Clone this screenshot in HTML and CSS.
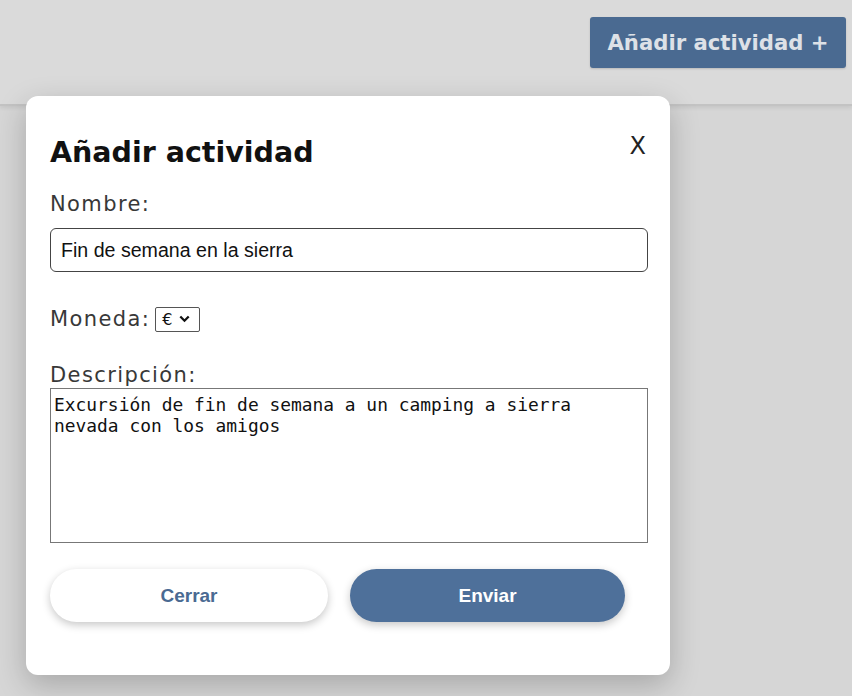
FILE: index.html
```html
<!DOCTYPE html>
<html lang="es">
<head>
<meta charset="utf-8">
<title>Añadir actividad</title>
<link rel="stylesheet" href="styles.css">
</head>
<body>
<header class="topbar">
  <button class="add-btn" type="button">Añadir actividad +</button>
</header>
<main class="content"></main>
<div class="modal">
  <button class="close" type="button">X</button>
  <h2 class="title">Añadir actividad</h2>
  <label class="label label-name" for="nombre">Nombre:</label>
  <input class="text-input" id="nombre" type="text" value="Fin de semana en la sierra">
  <div class="currency-row">
    <label class="label" for="moneda">Moneda:</label>
    <span class="select" id="moneda"><span class="sel-val">€</span><svg class="chev" width="11" height="8" viewBox="0 0 11 8"><path d="M1.3 1.5 L5.5 5.7 L9.7 1.5" fill="none" stroke="#111" stroke-width="2.3"/></svg></span>
  </div>
  <label class="label label-desc" for="desc">Descripción:</label>
  <textarea class="textarea" id="desc">Excursión de fin de semana a un camping a sierra nevada con los amigos</textarea>
  <div class="actions">
    <button class="btn btn-close" type="button">Cerrar</button>
    <button class="btn btn-send" type="button">Enviar</button>
  </div>
</div>
</body>
</html>
```
FILE: styles.css
```css
html, body {
  margin: 0;
  padding: 0;
}
body {
  width: 852px;
  height: 696px;
  background: #d6d6d6;
  overflow: hidden;
  position: relative;
  font-family: "DejaVu Sans", sans-serif;
}
.topbar {
  height: 106px;
  box-sizing: border-box;
  background: #dadada;
  border-bottom: 2px solid #c3c3c3;
  box-shadow: 0 2px 4px rgba(0,0,0,0.08);
  display: flex;
  justify-content: flex-end;
  align-items: flex-start;
  padding: 17px 6px 0 0;
}
.add-btn {
  width: 256px;
  height: 51px;
  border: none;
  border-radius: 3px;
  background: #4a6a91;
  color: #dde1e7;
  font-family: "DejaVu Sans", sans-serif;
  font-weight: 700;
  font-size: 21.2px;
  box-shadow: 0 1px 2px rgba(0,0,0,0.15);
}
.modal {
  position: absolute;
  left: 26px;
  top: 96px;
  width: 644px;
  height: 579px;
  box-sizing: border-box;
  background: #fff;
  border-radius: 12px;
  box-shadow: 0 10px 30px rgba(0,0,0,0.22);
  padding: 37px 22px 0 24px;
  display: flex;
  flex-direction: column;
  align-items: flex-start;
}
.close {
  position: absolute;
  top: 36px;
  right: 24px;
  background: none;
  border: none;
  padding: 0;
  font-family: "DejaVu Sans", sans-serif;
  font-weight: 400;
  font-size: 24px;
  color: #222;
  line-height: 28px;
}
.title {
  margin: 0;
  font-family: "DejaVu Sans", sans-serif;
  font-weight: 700;
  font-size: 28.5px;
  line-height: 40px;
  color: #111;
}
.label {
  font-family: "DejaVu Sans", sans-serif;
  font-weight: 400;
  font-size: 21px;
  letter-spacing: 1.4px;
  line-height: 28px;
  color: #383838;
}
.label-name {
  margin-top: 17px;
}
.text-input {
  margin-top: 10px;
  width: 598px;
  height: 44px;
  box-sizing: border-box;
  border: 1px solid #444;
  border-radius: 6px;
  padding: 0 10px;
  font-family: "Liberation Sans", Arial, sans-serif;
  font-size: 19.6px;
  color: #111;
}
.currency-row {
  margin-top: 33px;
  display: flex;
  align-items: center;
  gap: 5px;
}
.select {
  display: inline-flex;
  align-items: center;
  gap: 7px;
  width: 45px;
  height: 25px;
  box-sizing: border-box;
  border: 1px solid #555;
  border-radius: 2px;
  padding: 0 0 0 6px;
  font-family: "DejaVu Sans", sans-serif;
  font-size: 16px;
  color: #111;
}
.label-desc {
  margin-top: 28px;
}
.textarea {
  margin-top: -1px;
  width: 598px;
  height: 155px;
  box-sizing: border-box;
  border: 1px solid #777;
  border-radius: 0;
  padding: 5px 3px;
  resize: none;
  font-family: "DejaVu Sans Mono", "Liberation Mono", monospace;
  font-size: 17.9px;
  line-height: 21px;
  color: #111;
}
.actions {
  margin-top: 26px;
  display: flex;
  gap: 22px;
}
.btn {
  height: 53px;
  border-radius: 27px;
  border: none;
  font-family: "Liberation Sans", Arial, sans-serif;
  font-weight: 700;
  font-size: 19px;
  box-shadow: 0 3px 8px rgba(0,0,0,0.22);
}
.btn-close {
  width: 278px;
  background: #fff;
  color: #4a6a92;
}
.btn-send {
  width: 275px;
  background: #4e709a;
  color: #fff;
}
```
